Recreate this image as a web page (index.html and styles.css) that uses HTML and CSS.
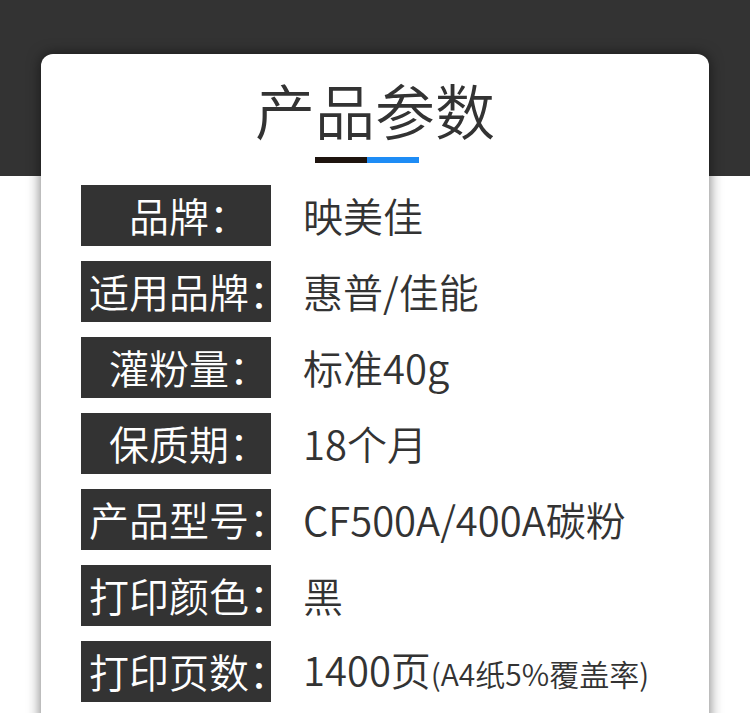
FILE: index.html
```html
<!DOCTYPE html>
<html lang="zh-CN">
<head>
<meta charset="utf-8">
<title>产品参数</title>
<link rel="stylesheet" href="styles.css">
</head>
<body>
<div class="card">
  <h1 class="title">产品参数</h1>
  <div class="bar"><span class="bar-dark"></span><span class="bar-blue"></span></div>
  <div class="rows">
    <div class="row"><div class="label"><span>品牌：</span></div><div class="value">映美佳</div></div>
    <div class="row"><div class="label"><span>适用品牌：</span></div><div class="value">惠普/佳能</div></div>
    <div class="row"><div class="label"><span>灌粉量：</span></div><div class="value">标准40g</div></div>
    <div class="row"><div class="label"><span>保质期：</span></div><div class="value">18个月</div></div>
    <div class="row"><div class="label"><span>产品型号：</span></div><div class="value">CF500A/400A碳粉</div></div>
    <div class="row"><div class="label"><span>打印颜色：</span></div><div class="value">黑</div></div>
    <div class="row"><div class="label"><span>打印页数：</span></div><div class="value">1400页<small class="note">(A4纸5%覆盖率)</small></div></div>
  </div>
</div>
</body>
</html>
```
FILE: styles.css
```css
html, body {
  margin: 0;
  padding: 0;
}
body {
  background: linear-gradient(#333333 0, #333333 176px, #ffffff 176px);
  font-family: "Noto Sans CJK SC", "Noto Sans", sans-serif;
  color: #333333;
  overflow: hidden;
  height: 713px;
}
.card {
  margin: 54px 41px 0;
  background: #ffffff;
  border-radius: 12px;
  box-shadow: 0 0 14px rgba(0, 0, 0, 0.55);
  padding: 22px 40px 40px;
  min-height: 620px;
}
.title {
  margin: 0;
  text-align: center;
  font-size: 60px;
  font-weight: 350;
  line-height: 66px;
  color: #333333;
}
.bar {
  display: flex;
  justify-content: center;
  margin: 15px 16px 0 0;
  height: 6px;
}
.bar-dark {
  width: 52px;
  background: #1e140e;
}
.bar-blue {
  width: 52px;
  background: #1e8cf5;
}
.rows {
  display: flex;
  flex-direction: column;
  gap: 15px;
  margin-top: 22px;
}
.row {
  display: flex;
  align-items: center;
  gap: 32px;
  height: 61px;
}
.label {
  box-sizing: border-box;
  width: 190px;
  height: 61px;
  padding-left: 26px;
  display: flex;
  justify-content: center;
  align-items: center;
  background: #333333;
  color: #ffffff;
  font-size: 40px;
  font-weight: 350;
  line-height: 61px;
  white-space: nowrap;
  flex-shrink: 0;
}
.label span {
  flex-shrink: 0;
}
.value {
  font-size: 40px;
  font-weight: 350;
  line-height: 61px;
  color: #333333;
  white-space: nowrap;
}
.note {
  font-size: 30px;
}
```
